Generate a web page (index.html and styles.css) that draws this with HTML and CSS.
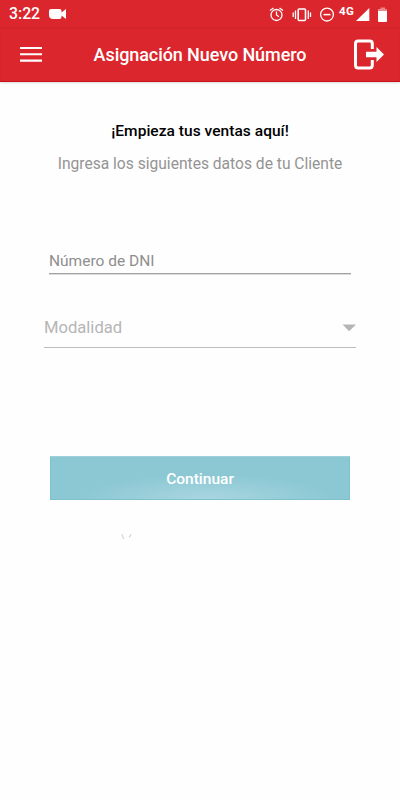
FILE: index.html
```html
<!DOCTYPE html>
<html lang="es">

<head>
    <meta charset="UTF-8">
    <meta name="viewport" content="width=device-width, initial-scale=1.0">
    <title>Asignación Nuevo Número</title>
    <link rel="stylesheet" href="styles.css">
</head>

<body>
    <!-- Status bar -->
    <div class="status-bar">
        <span class="clock">3:22</span>
        <svg class="camera" width="18" height="10" viewBox="0 0 18 10">
            <path d="M2 0H10.500Q12.500 0 12.500 2V3.600L17 0V10L12.500 6.400V8Q12.500 10 10.500 10H4Q0 10 0 6V2Q0 0 2 0Z" fill="#fff" />
        </svg>
        <svg class="status-icons" width="130" height="26" viewBox="0 0 130 26">
            <g fill="none" stroke="#fff" stroke-width="1.300">
                <circle cx="16.500" cy="14" r="5.500" />
                <path d="M16.500 10.500V14L19 15.700M10 9.500L13.500 7M23 9.500L19.500 7" />
                <rect x="38.200" y="8" width="7.300" height="11.500" rx="1" stroke-width="1.600" />
                <path d="M35.500 9.500V18M33.200 11.500V16M48.300 9.500V18M50.500 11.500V16" />
                <circle cx="67" cy="13.600" r="6.400" />
                <path d="M63.500 13.600H70.500" stroke-width="1.500" />
            </g>
            <path d="M109.300 7V20H96Z" fill="#fff" />
            <path d="M120.500 6.500H125V8H127V10H118V8H120.500Z" fill="#fff" opacity="0.450" />
            <path d="M118 10H127V20Q127 21 126 21H119Q118 21 118 20Z" fill="#fff" />
        </svg>
        <span class="network">4G</span>
    </div>

    <!-- Toolbar -->
    <header class="toolbar">
        <button class="icon-button" aria-label="Menú">
            <svg width="22" height="15" viewBox="0 0 22 15">
                <path d="M0 1H22M0 7.300H22M0 13.600H22" stroke="#fff" stroke-width="2.100" />
            </svg>
        </button>
        <h1>Asignación Nuevo Número</h1>
        <button class="icon-button" aria-label="Salir">
            <svg width="32" height="32" viewBox="0 0 32 32">
                <path d="M19.300 10V4.700Q19.300 2 16.600 2H5.200Q2.500 2 2.500 4.700V26.300Q2.500 29 5.200 29H16.600Q19.300 29 19.300 26.300V21" fill="none" stroke="#fff" stroke-width="3" />
                <path d="M13 12.800H23.500V8L31 15.500L23.500 23V18.300H13Z" fill="#fff" />
            </svg>
        </button>
    </header>

    <!-- Customer form -->
    <main class="container">
        <h2>¡Empieza tus ventas aquí!</h2>
        <p class="subtitle">Ingresa los siguientes datos de tu Cliente</p>

        <form>
            <input type="text" class="dni" placeholder="Número de DNI" aria-label="Número de DNI">
            <div class="select">
                <span>Modalidad</span>
                <svg width="14" height="8" viewBox="0 0 14 8">
                    <path d="M0.500 0.500H14L7.200 7.200Z" fill="#b5b5b5" />
                </svg>
            </div>
            <button type="button" class="submit">Continuar</button>
        </form>

        <svg class="spinner" width="12" height="8" viewBox="0 0 12 8">
            <path d="M1 1Q1.200 3.500 3 6M10 1Q9.800 2.800 8 4.300" fill="none" stroke="#d5d5d5" stroke-width="1.200" />
        </svg>
    </main>
</body>

</html>
```

FILE: styles.css
```css
* {
    box-sizing: border-box;
}

body {
    font-family: Roboto, sans-serif;
    margin: 0;
    min-height: 100vh;
    background-color: #fefefe;
}

.status-bar {
    display: flex;
    align-items: center;
    position: relative;
    height: 27px;
    padding-left: 9px;
    background-color: #db262d;
    color: #fff;
}

.clock {
    width: 40px;
    padding-top: 1px;
    font-size: 15.8px;
    font-weight: 500;
    line-height: 28px;
}

.status-icons {
    margin-left: auto;
    margin-right: 10px;
}

.network {
    position: absolute;
    left: 339px;
    top: 4px;
    font-size: 11.5px;
    font-weight: 700;
    line-height: 14px;
    letter-spacing: 0.4px;
}

.toolbar {
    display: flex;
    justify-content: space-between;
    align-items: center;
    height: 55px;
    padding: 0 15px 0 20px;
    background-color: #db262d;
    border-bottom: 1px solid #cb1219;
    box-shadow: 0 1px 2px rgba(0, 0, 0, 0.15), inset 0 1px 2px rgba(0, 0, 0, 0.08);
}

.toolbar h1 {
    margin: 0;
    padding: 2px 0 0 5px;
    font-size: 18px;
    font-weight: 500;
    line-height: 24px;
    letter-spacing: -0.08px;
    color: #fff;
}

.icon-button {
    display: flex;
    padding: 0;
    border: none;
    background: none;
}

.icon-button svg {
    margin-top: 1px;
}

.container {
    padding: 39px 44px 0;
    text-align: center;
}

.container h2 {
    margin: 0;
    font-size: 15.5px;
    font-weight: 500;
    line-height: 20px;
    letter-spacing: 0.04px;
    color: #000;
}

.subtitle {
    margin: 13px 0 0;
    font-size: 15.6px;
    line-height: 20px;
    color: #949494;
}

form {
    display: flex;
    flex-direction: column;
    padding-top: 71px;
}

.dni {
    height: 29px;
    margin: 0 5px;
    padding: 3px 0 0;
    border: none;
    border-bottom: 1.5px solid #a2a2a2;
    box-shadow: 0 1px 0 #dcdcdc;
    background: none;
    font-family: inherit;
    font-size: 15.5px;
}

.dni::placeholder {
    color: #8e8e8e;
    opacity: 1;
}

.select {
    display: flex;
    justify-content: space-between;
    align-items: center;
    height: 40px;
    margin-top: 34px;
    border-bottom: 1px solid #bdbdbd;
    font-size: 16.6px;
    color: #b5b5b5;
}

.submit {
    height: 44px;
    margin: 108px 6px 0;
    padding: 1px 0 0;
    border: 1px solid #7bc2cf;
    border-top-color: #9fd0da;
    border-radius: 1px;
    background: radial-gradient(ellipse 125px 24px at 52% 100%, #a9d6e0, #8cc8d4);
    color: #fff;
    font-family: inherit;
    font-size: 15.5px;
    font-weight: 500;
}

.spinner {
    display: block;
    margin: 33px 0 0 76.5px;
}
```
